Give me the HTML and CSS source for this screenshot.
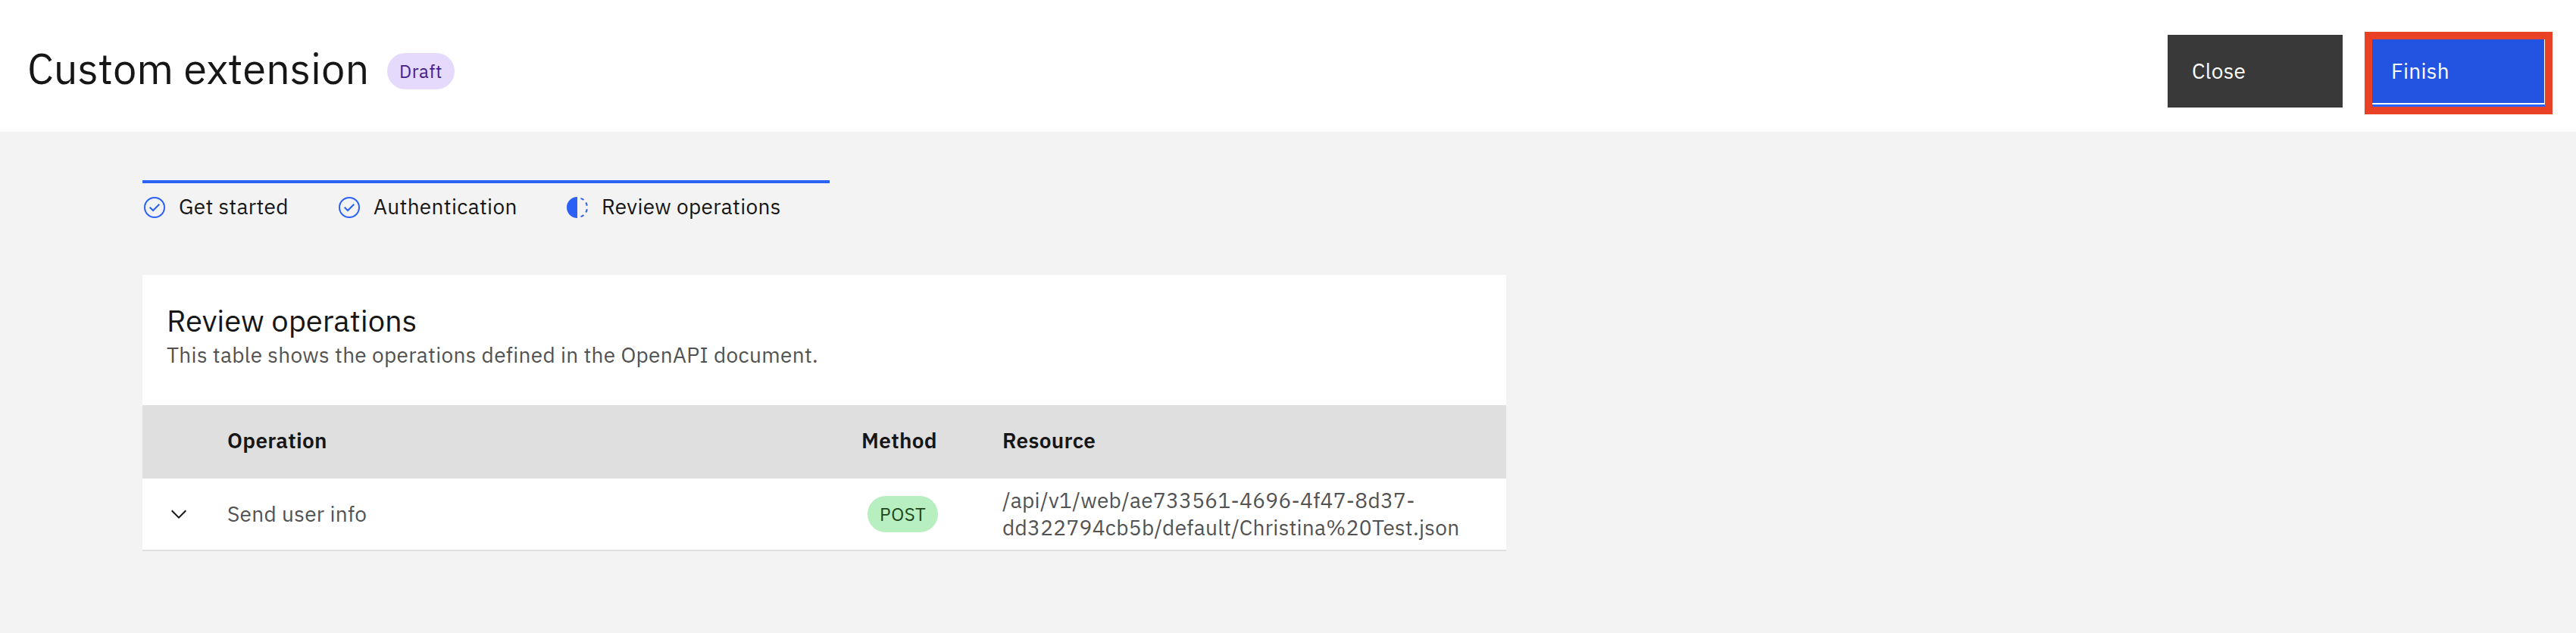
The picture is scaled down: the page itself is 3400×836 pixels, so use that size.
FILE: index.html
```html
<!DOCTYPE html>
<html lang="en">
<head>
<meta charset="utf-8">
<title>Custom extension</title>
<link rel="stylesheet" href="styles.css">
</head>
<body>
<header class="header">
  <h1 class="header-title">Custom extension</h1>
  <span class="tag tag-purple">Draft</span>
  <div class="actions">
    <button class="btn btn-secondary">Close</button>
    <div class="highlight"><button class="btn btn-primary">Finish</button></div>
  </div>
</header>
<main class="main">
  <ol class="steps">
    <li class="step">
      <svg class="icon icon-blue" viewBox="0 0 32 32"><circle cx="16" cy="16" r="13" fill="none" stroke="currentColor" stroke-width="2"/><path fill="currentColor" d="M14 21.414L9 16.413 10.413 15 14 18.586 21.585 11 23 12.415 14 21.414z"/></svg>
      <span>Get started</span>
    </li>
    <li class="step">
      <svg class="icon icon-blue" viewBox="0 0 32 32"><circle cx="16" cy="16" r="13" fill="none" stroke="currentColor" stroke-width="2"/><path fill="currentColor" d="M14 21.414L9 16.413 10.413 15 14 18.586 21.585 11 23 12.415 14 21.414z"/></svg>
      <span>Authentication</span>
    </li>
    <li class="step">
      <svg class="icon icon-blue" viewBox="0 0 32 32"><path fill="currentColor" d="M23.7642 6.8593l1.2851-1.5315A13.976 13.976 0 0020.8672 2.887l-.6836 1.8776A11.9729 11.9729 0 0123.7642 6.8593zM27.81 14l1.9677-.4128A13.8888 13.8888 0 0028.14 9.0457L26.4087 10A12.52 12.52 0 0127.81 14zM20.1836 27.2354l.6836 1.8776a13.976 13.976 0 004.1821-2.4408l-1.2851-1.5315A11.9729 11.9729 0 0120.1836 27.2354zM26.4087 22L28.14 23a14.14 14.14 0 001.6382-4.5872L27.81 18.0659A12.1519 12.1519 0 0126.4087 22zM16 30V2a14 14 0 000 28z"/></svg>
      <span>Review operations</span>
    </li>
  </ol>
  <section class="card">
    <div class="card-head">
      <h2 class="card-title">Review operations</h2>
      <p class="card-text">This table shows the operations defined in the OpenAPI document.</p>
    </div>
    <div class="row row-head">
      <span></span><span>Operation</span><span>Method</span><span>Resource</span>
    </div>
    <div class="row row-body">
      <svg class="icon chevron" viewBox="0 0 16 16"><path fill="currentColor" d="M8 11L3 6 3.7 5.3 8 9.6 12.3 5.3 13 6z"/></svg>
      <span>Send user info</span>
      <span class="tag tag-green">POST</span>
      <span>/api/v1/web/ae733561-4696-4f47-8d37-<br>dd322794cb5b/default/Christina%20Test.json</span>
    </div>
  </section>
</main>
</body>
</html>
```
FILE: styles.css
```css
* { box-sizing: border-box; margin: 0; padding: 0; }

body {
  min-height: 836px;
  background: #f3f3f3;
  color: #161616;
  font: 400 28px/36px "IBM Plex Sans", Roboto, sans-serif;
  letter-spacing: 0.32px;
}

.header {
  display: flex;
  align-items: flex-start;
  height: 174px;
  padding: 42px 31px 0 36px;
  background: #fff;
}

.header-title {
  width: 475px;
  padding-top: 16px;
  font-size: 56px;
  font-weight: 400;
  line-height: 64px;
  letter-spacing: 0;
  white-space: nowrap;
}

.tag {
  height: 48px;
  padding: 0 16px;
  border-radius: 24px;
  font-size: 24px;
  line-height: 48px;
  letter-spacing: 0.64px;
  white-space: nowrap;
}

.tag-purple { width: 89px; margin-top: 28px; background: #e6dafc; color: #45208a; }
.tag-green { width: 93px; margin-left: 8px; background: #b7efc0; color: #1d4519; }

.actions { display: flex; gap: 29px; margin-left: auto; }

.btn {
  border: 0;
  color: #fff;
  font: inherit;
  letter-spacing: inherit;
  text-align: left;
}

.btn-secondary {
  width: 231px;
  height: 96px;
  margin-top: 4px;
  padding: 0 32px 1px;
  background: #393939;
}

.highlight {
  width: 248px;
  height: 109px;
  border: 10px solid #e94126;
  border-bottom-width: 10px;
  background: #2b62f5;
}

.btn-primary {
  display: block;
  width: 228px;
  height: 86px;
  padding: 0 25px;
  border-right: 1px solid #fff;
  border-bottom: 2px solid #fff;
  background: #2354e1;
}

.main { padding: 64px 188px 0; }

.steps {
  display: grid;
  grid-template-columns: 257px 301px 1fr;
  width: 907px;
  height: 125px;
  padding-top: 13px;
  border-top: 4px solid #2b62f5;
  list-style: none;
}

.step { display: flex; align-items: center; gap: 16px; height: 36px; }

.icon { width: 32px; height: 32px; margin-top: 2px; flex: none; }
.icon-blue { color: #2b62f5; }

.card { width: 1800px; background: #fff; }
.card-head { height: 172px; padding: 32px 32px 48px; }
.card-title { font-size: 40px; font-weight: 400; line-height: 56px; letter-spacing: 0; }
.card-text { color: #525252; }

.row {
  display: grid;
  grid-template-columns: 80px 837px 186px 1fr;
  align-items: center;
  padding-left: 32px;
}

.row-head { height: 97px; padding-bottom: 4px; background: #dfdfdf; font-weight: 600; }
.row-body { height: 96px; border-bottom: 2px solid #dfdfdf; color: #525252; }
.chevron { margin: 0; color: #161616; }
```
